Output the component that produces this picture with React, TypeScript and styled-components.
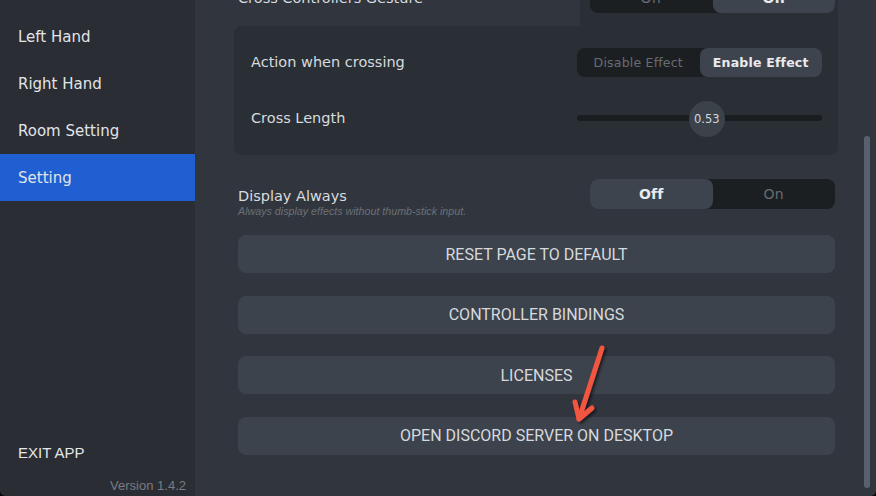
import React from "react";
import styled, { createGlobalStyle } from "styled-components";

const GlobalStyle = createGlobalStyle`
  html, body {
    margin: 0;
    padding: 0;
    background: #000;
  }
  body {
    width: 876px;
    height: 496px;
    overflow: hidden;
  }
`;

const labelFont = `"DejaVu Sans", "Noto Sans", sans-serif`;

const AppShell = styled.div`
  position: relative;
  display: flex;
  width: 876px;
  height: 496px;
  border-radius: 0 0 5px 5px;
  overflow: hidden;
`;

const Sidebar = styled.nav`
  width: 195px;
  flex-shrink: 0;
  display: flex;
  flex-direction: column;
  background: #2a2d33;
  padding: 13px 0 2px;
  box-sizing: border-box;
`;

const NavItem = styled.div<{ active?: boolean }>`
  height: 47px;
  display: flex;
  align-items: center;
  padding-left: 18px;
  font-family: ${labelFont};
  font-size: 15px;
  color: #e1e4e8;
  background: ${(p) => (p.active ? "#1f5fd2" : "transparent")};
`;

const Spacer = styled.div`
  flex: 1;
`;

const ExitButton = styled.div`
  height: 44px;
  display: flex;
  align-items: center;
  padding-left: 18px;
  font-family: "Liberation Sans", Arial, sans-serif;
  font-size: 15px;
  color: #e4e6e9;
`;

const Version = styled.div`
  margin-top: 4px;
  padding-right: 9px;
  text-align: right;
  font-family: "Liberation Sans", Arial, sans-serif;
  font-size: 13px;
  line-height: 16px;
  color: #787c83;
`;

const Main = styled.main`
  position: relative;
  flex: 1;
  background: #31363e;
  overflow: hidden;
`;

const ScrollArea = styled.div`
  height: 100%;
  overflow: hidden;
  padding: 0 38px 0 39px;
`;

/* the list is scrolled: its first rows sit above the visible area */
const Content = styled.div`
  display: flex;
  flex-direction: column;
  margin-top: -31px;
`;

const GestureRow = styled.div`
  display: flex;
  height: 57px;
`;

const GestureLabel = styled.div`
  flex: 1;
  display: flex;
  align-items: center;
  padding-left: 4px;
  font-family: ${labelFont};
  font-size: 14.5px;
  color: #d8dbdf;
`;

const ToggleHolder = styled.div`
  display: flex;
  align-items: center;
  padding: 0 3px 0 10px;
  background: #2a2e35;
`;

const SubPanel = styled.section`
  background: #2a2e35;
  border-radius: 8px 0 8px 8px;
  padding: 8px 16px 9px 17px;
`;

const SettingRow = styled.div`
  height: 56px;
  display: flex;
  align-items: center;
  justify-content: space-between;
`;

const Label = styled.span`
  font-family: ${labelFont};
  font-size: 14.5px;
  color: #d8dbdf;
`;

const Segmented = styled.div<{ tall?: boolean }>`
  display: flex;
  width: 245px;
  height: ${(p) => (p.tall ? 30 : 29)}px;
  background: #1c1f21;
  border-radius: 8px;
`;

const Segment = styled.div<{ active?: boolean; big?: boolean }>`
  flex: 1;
  display: flex;
  align-items: center;
  justify-content: center;
  border-radius: 8px;
  font-family: ${labelFont};
  font-size: ${(p) => (p.big ? 14 : 12.5)}px;
  font-weight: ${(p) => (p.active ? 700 : 400)};
  letter-spacing: 0.2px;
  color: ${(p) => (p.active ? "#e8eaed" : "#676c73")};
  background: ${(p) => (p.active ? "#3e444d" : "transparent")};
`;

const Slider = styled.div`
  position: relative;
  width: 245px;
  height: 36px;
  display: flex;
  align-items: center;
`;

const Track = styled.div`
  width: 100%;
  height: 6px;
  border-radius: 3px;
  background: #1a1d20;
`;

const Knob = styled.div`
  position: absolute;
  top: 1px;
  width: 36px;
  height: 36px;
  border-radius: 50%;
  background: #3c424a;
  display: flex;
  align-items: center;
  justify-content: center;
  font-family: ${labelFont};
  font-size: 11.5px;
  color: #d2d6da;
`;

const DisplayRow = styled.div`
  box-sizing: border-box;
  height: 58px;
  margin-top: 11px;
  padding: 13px 3px 0 4px;
  display: flex;
  align-items: flex-start;
  justify-content: space-between;
`;

const LabelStack = styled.div`
  display: flex;
  flex-direction: column;
`;

const Title = styled.span`
  margin-top: 7px;
  font-family: ${labelFont};
  font-size: 14.5px;
  line-height: 20px;
  color: #d8dbdf;
`;

const Hint = styled.span`
  margin-top: -2px;
  font-family: "Liberation Sans", Arial, sans-serif;
  font-style: italic;
  font-size: 10.7px;
  line-height: 15px;
  color: #6b7077;
`;

const ButtonList = styled.div`
  display: flex;
  flex-direction: column;
  gap: 22.5px;
  margin-top: 11px;
`;

const ActionButton = styled.button`
  height: 38px;
  margin: 0 3px 0 4px;
  border: none;
  border-radius: 8px;
  background: #3d434c;
  font-family: Roboto, "Liberation Sans", sans-serif;
  font-size: 16px;
  color: #d6dade;
  text-transform: uppercase;
  padding: 0;
`;

const ScrollThumb = styled.div`
  position: absolute;
  right: 6px;
  top: 136px;
  width: 6px;
  height: 352px;
  border-radius: 3px;
  background: #596070;
`;

const ArrowMark = styled.svg`
  position: absolute;
  left: 560px;
  top: 338px;
  pointer-events: none;
`;

const Toggle = ({
  options,
  selected,
  big,
}: {
  options: string[];
  selected: number;
  big?: boolean;
}) => (
  <Segmented tall={big}>
    {options.map((o, i) => (
      <Segment key={o} active={i === selected} big={big}>
        {o}
      </Segment>
    ))}
  </Segmented>
);

const crossLength = 0.53;

export default function App() {
  return (
    <>
      <GlobalStyle />
      <AppShell>
        <Sidebar>
          <NavItem>Left Hand</NavItem>
          <NavItem>Right Hand</NavItem>
          <NavItem>Room Setting</NavItem>
          <NavItem active>Setting</NavItem>
          <Spacer />
          <ExitButton>EXIT APP</ExitButton>
          <Version>Version 1.4.2</Version>
        </Sidebar>
        <Main>
          <ScrollArea>
            <Content>
              <GestureRow>
                <GestureLabel>Cross Controllers Gesture</GestureLabel>
                <ToggleHolder>
                  <Toggle options={["Off", "On"]} selected={1} big />
                </ToggleHolder>
              </GestureRow>
              <SubPanel>
                <SettingRow>
                  <Label>Action when crossing</Label>
                  <Toggle options={["Disable Effect", "Enable Effect"]} selected={1} />
                </SettingRow>
                <SettingRow>
                  <Label>Cross Length</Label>
                  <Slider>
                    <Track />
                    <Knob style={{ left: `calc(${crossLength * 100}% - 18px)` }}>
                      {crossLength.toFixed(2)}
                    </Knob>
                  </Slider>
                </SettingRow>
              </SubPanel>
              <DisplayRow>
                <LabelStack>
                  <Title>Display Always</Title>
                  <Hint>Always display effects without thumb-stick input.</Hint>
                </LabelStack>
                <Toggle options={["Off", "On"]} selected={0} big />
              </DisplayRow>
              <ButtonList>
                <ActionButton>Reset page to default</ActionButton>
                <ActionButton>Controller bindings</ActionButton>
                <ActionButton>Licenses</ActionButton>
                <ActionButton>Open Discord server on desktop</ActionButton>
              </ButtonList>
            </Content>
          </ScrollArea>
          <ScrollThumb />
        </Main>
        <ArrowMark width="50" height="90" viewBox="0 0 50 90">
          <defs>
            <filter id="arrowShadow" x="-50%" y="-50%" width="200%" height="200%">
              <feDropShadow dx="2" dy="2" stdDeviation="1.5" floodColor="#000" floodOpacity="0.55" />
            </filter>
          </defs>
          <g
            filter="url(#arrowShadow)"
            stroke="#f25540"
            strokeWidth="5"
            strokeLinecap="round"
            strokeLinejoin="round"
            fill="none"
          >
            <path d="M42 10 L19 81" />
            <path d="M15 64 L19 81 L32 70" />
          </g>
        </ArrowMark>
      </AppShell>
    </>
  );
}
